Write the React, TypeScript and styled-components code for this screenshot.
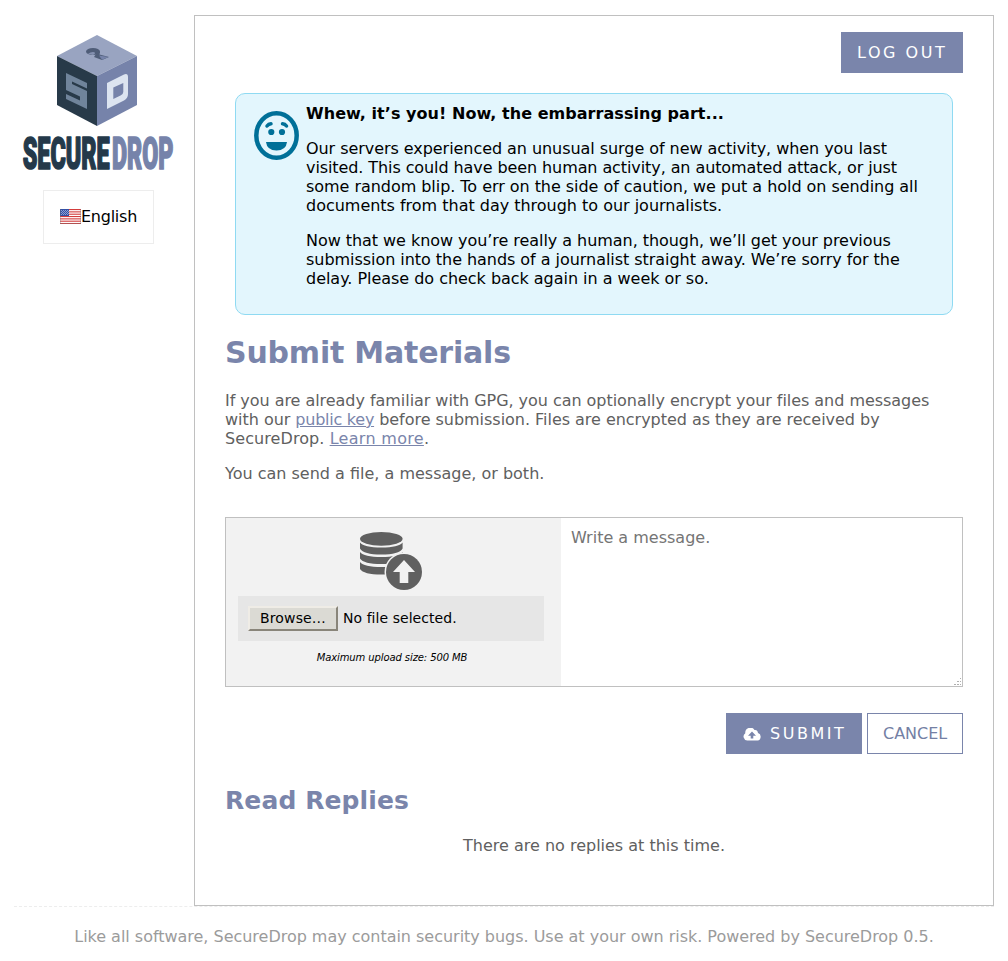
import React from "react";
import styled, { createGlobalStyle, css } from "styled-components";

const GlobalStyle = createGlobalStyle`
  * { box-sizing: border-box; }
  body {
    margin: 0;
    background: #fff;
    color: #000;
    font: 16px/19px "DejaVu Sans", sans-serif;
  }
  p, h1, h2 { margin: 0; }
`;

const Page = styled.div`
  padding: 15px 14px 0;
`;

const Columns = styled.div`
  display: grid;
  grid-template-columns: 180px 800px;
`;

const Sidebar = styled.aside`
  display: flex;
  flex-direction: column;
  align-items: flex-start;
`;

const LogoArt = styled.svg`
  display: block;
  width: 166px;
  height: 145px;
  margin-top: 19px;
  overflow: visible;
`;

const Language = styled.div`
  display: flex;
  align-items: center;
  width: 111px;
  height: 54px;
  margin: 11px 0 0 29px;
  padding: 0 0 2px 16px;
  border: 1px solid #ededed;
  letter-spacing: -0.25px;
`;

const Flag = styled.svg`
  display: block;
  width: 21px;
  height: 15px;
`;

const Main = styled.main`
  height: 891px;
  padding: 16px 30px 0;
  border: 1px solid #c0c0c0;
  color: #606060;
`;

const Actions = styled.div`
  display: flex;
  justify-content: flex-end;
  gap: 5px;
`;

const Button = styled.button<{ $outline?: boolean; $width: number }>`
  display: flex;
  align-items: center;
  width: ${(p) => p.$width}px;
  height: 41px;
  padding: 0 0 0 15px;
  border: 1px solid #7a85ab;
  background: #7a85ab;
  color: #fff;
  font: inherit;
  letter-spacing: 2.55px;
  white-space: nowrap;
  ${(p) =>
    p.$outline &&
    css`
      background: #fff;
      color: #7480a4;
      letter-spacing: 0;
    `}
`;

const CloudIcon = styled.svg`
  width: 19px;
  height: 13px;
  margin: 2px 8px 0 1px;
`;

const Notice = styled.section`
  display: flex;
  height: 222px;
  margin: 20px 10px 0;
  padding: 10px 10px 0 18px;
  border: 1px solid #8fdaf2;
  border-radius: 10px;
  background: #e3f6fd;
  color: #000;
`;

const Smiley = styled.svg`
  flex: none;
  width: 46px;
  height: 50px;
  margin: 7px 6px 0 0;
`;

const NoticeBody = styled.div`
  flex: 1;
`;

const Paragraph = styled.p`
  margin-bottom: 16px;
`;

const Line = styled.span<{ $track?: number }>`
  display: block;
  white-space: nowrap;
  letter-spacing: ${(p) => p.$track ?? 0}px;
`;

const Title = styled.h1`
  margin-top: 20px;
  color: #7a85ab;
  font-size: 30px;
  line-height: 35px;
  letter-spacing: -0.2px;
`;

const Subtitle = styled.h2`
  margin-top: 32px;
  color: #7a85ab;
  font-size: 25px;
  line-height: 29px;
  letter-spacing: 0.1px;
`;

const Intro = styled.div`
  margin-top: 21px;
`;

const Link = styled.a<{ $track?: number }>`
  color: #7a85ab;
  text-decoration: underline;
  letter-spacing: ${(p) => p.$track ?? 0}px;
`;

const Composer = styled.div`
  display: grid;
  grid-template-columns: 335px 1fr;
  height: 170px;
  margin: 34px 0 26px;
  border: 1px solid #c0c0c0;
`;

const UploadPane = styled.div`
  display: flex;
  flex-direction: column;
  align-items: center;
  padding: 13px 17px 0 12px;
  background: #f2f2f2;
`;

const UploadIcon = styled.svg`
  display: block;
  width: 64px;
  height: 60px;
`;

const FileRow = styled.div`
  display: flex;
  align-items: center;
  gap: 5px;
  width: 306px;
  height: 45px;
  margin-top: 5px;
  padding-left: 10px;
  background: #e6e6e6;
  color: #000;
  font-size: 14px;
  letter-spacing: 0.05px;
`;

const Browse = styled.button`
  width: 90px;
  height: 25px;
  padding: 0;
  border: 2px solid;
  border-color: #efece6 #89857a #89857a #efece6;
  background: #dbdad4;
  color: #000;
  font: inherit;
  letter-spacing: 0.15px;
`;

const UploadHint = styled.p`
  margin-top: 10px;
  padding-left: 2px;
  color: #000;
  font-size: 10px;
  line-height: 13px;
  font-style: italic;
  letter-spacing: -0.1px;
`;

const Message = styled.div`
  display: flex;
  flex-direction: column;
  justify-content: space-between;
  padding: 10px 0 0 10px;
  color: #757575;
`;

const Grip = styled.svg`
  align-self: flex-end;
  width: 9px;
  height: 9px;
`;

const Empty = styled.p`
  margin-top: 21px;
  text-align: center;
`;

const Footer = styled.footer`
  padding-top: 20px;
  border-top: 1px dashed #ededed;
  color: #9b9b9b;
  text-align: center;
  letter-spacing: -0.02px;
`;

const stripes = [0, 1, 2, 3, 4, 5, 6];

function Logo() {
  return (
    <LogoArt viewBox="14 34 166 145" aria-label="SecureDrop">
      <path d="M97 35 137 56 97 76 57 56Z" fill="#99a4c1" />
      <path d="M57 56 97 76V126L57 105Z" fill="#283a49" />
      <path d="M97 76 137 56V105L97 126Z" fill="#7683aa" />
      <path
        d="M66 73 87 83V88.500L72 81.500V84L87 91V109L66 99V94L80 100.500V96.500L66 90Z"
        fill="#70849b"
      />
      <path
        fillRule="evenodd"
        d="M107 83 124 74.500Q128 73 128 77V94Q128 98 124 100.500L107 109ZM113.300 87.500V99L120.500 95.500Q123.300 94 123.300 92V83Z"
        fill="#dce4f0"
      />
      <ellipse cx="93" cy="51.500" rx="7" ry="3.600" fill="#4f5d78" />
      <path d="M97 50 100 52 99.500 54.500 109 57 102 60 94 57 96 54Z" fill="#4f5d78" />
      <path d="M88 53.800Q91 51.500 94.500 52.200Q96 53.500 93 55Z" fill="#8490b0" />
      <path d="M99 55.500 108.500 57 102 59.800Z" fill="#7683aa" />
      <g fontFamily="Roboto, sans-serif" fontWeight="900" fontSize="44" strokeLinejoin="round" strokeWidth="1.700">
        <text x="22.700" y="168.800" textLength="87" lengthAdjust="spacingAndGlyphs" fill="#24394a" stroke="#24394a">
          SECURE
        </text>
        <text x="112" y="168.800" textLength="61.500" lengthAdjust="spacingAndGlyphs" fill="#7683aa" stroke="#7683aa">
          DROP
        </text>
      </g>
    </LogoArt>
  );
}

export default function App() {
  return (
    <>
      <GlobalStyle />
      <Page>
        <Columns>
          <Sidebar>
            <Logo />
            <Language>
              <Flag viewBox="0 0 21 15">
                <rect width="21" height="15" rx="1" fill="#fff" />
                {stripes.map((i) => (
                  <rect key={i} y={i * 2.33} width="21" height="1.1" fill="#d33d3d" />
                ))}
                <rect width="9" height="7" fill="#3450a4" />
                <path d="M1 1.500H9M2 2.500H9M1 3.500H9M2 4.500H9M1 5.500H9" stroke="#8fa0d0" strokeDasharray="1 1" />
                <path d="M.5 0V15M20.500 0V15M0 14.500H21" stroke="#777" strokeOpacity=".35" />
              </Flag>
              English
            </Language>
          </Sidebar>
          <Main>
            <Actions>
              <Button $width={122}>LOG OUT</Button>
            </Actions>
            <Notice>
              <Smiley viewBox="0 0 46 50">
                <ellipse cx="22.500" cy="24.500" rx="20.200" ry="22.200" fill="none" stroke="#007098" strokeWidth="4.500" />
                <circle cx="17.300" cy="21" r="3.100" fill="#007098" />
                <circle cx="28" cy="21" r="3.100" fill="#007098" />
                <path d="M13 15Q14.500 13 17 12.800M28.500 12.800Q31 13 32.500 15" fill="none" stroke="#007098" strokeWidth="3.500" strokeLinecap="round" />
                <path d="M12 31H33Q32 39.500 22.500 39.500Q13 39.500 12 31Z" fill="#007098" />
              </Smiley>
              <NoticeBody>
                <Paragraph>
                  <Line as="strong" $track={0.045}>Whew, it’s you! Now, the embarrassing part...</Line>
                </Paragraph>
                <Paragraph>
                  <Line $track={-0.055}>Our servers experienced an unusual surge of new activity, when you last </Line>
                  <Line $track={-0.09}>visited. This could have been human activity, an automated attack, or just </Line>
                  <Line $track={-0.045}>some random blip. To err on the side of caution, we put a hold on sending all </Line>
                  <Line $track={-0.015}>documents from that day through to our journalists.</Line>
                </Paragraph>
                <Paragraph>
                  <Line $track={-0.05}>Now that we know you’re really a human, though, we’ll get your previous </Line>
                  <Line $track={-0.045}>submission into the hands of a journalist straight away. We’re sorry for the </Line>
                  <Line $track={-0.03}>delay. Please do check back again in a week or so.</Line>
                </Paragraph>
              </NoticeBody>
            </Notice>
            <Title>Submit Materials</Title>
            <Intro>
              <Paragraph>
                <Line $track={-0.042}>If you are already familiar with GPG, you can optionally encrypt your files and messages </Line>
                <Line $track={-0.03}>
                  with our <Link $track={-0.25}>public key</Link> before submission. Files are encrypted as they are
                  received by{" "}
                </Line>
                <Line $track={0.08}>
                  SecureDrop. <Link $track={0.3}>Learn more</Link>.
                </Line>
              </Paragraph>
              <p>You can send a file, a message, or both.</p>
            </Intro>
            <Composer>
              <UploadPane>
                <UploadIcon viewBox="0 0 64 60" fill="#606060">
                  <ellipse cx="22.300" cy="7.800" rx="21.300" ry="6.900" />
                  <path d="M1 11.500Q5 16.500 22.300 16.500T43.600 11.500V17.500Q40 23.500 22.300 23.500T1 17.500Z" />
                  <path d="M1 21Q5 26 22.300 26T43.600 21V27.500Q40 33 22.300 33T1 27.500Z" />
                  <path d="M1 31Q5 36 22.300 36T43.600 31V38Q40 43.500 22.300 43.500T1 38Z" />
                  <circle cx="45" cy="41" r="19.500" fill="#f2f2f2" />
                  <circle cx="45" cy="41" r="18" />
                  <path d="M45 29 56 41H49.300V52H40.700V41H34Z" fill="#f2f2f2" />
                </UploadIcon>
                <FileRow>
                  <Browse>Browse…</Browse>
                  <span>No file selected.</span>
                </FileRow>
                <UploadHint>Maximum upload size: 500 MB</UploadHint>
              </UploadPane>
              <Message>
                <span>Write a message.</span>
                <Grip viewBox="0 0 9 9" fill="#b0b0b0">
                  <path d="M7 1h1v1H7zM4 4h2v1H4zM7 4h1v1H7zM1 7h2v1H1zM4 7h2v1H4zM7 7h1v1H7z" />
                </Grip>
              </Message>
            </Composer>
            <Actions>
              <Button $width={136}>
                <CloudIcon viewBox="0 0 19 13">
                  <path d="M4.200 12.500A4 4 0 0 1 2.300 5.200A5 5 0 0 1 11.500 2Q14.500 1.500 15 5A3.900 3.900 0 0 1 14.600 12.500Z" fill="#fff" />
                  <path d="M9 3.500 13 7.700H10.300V10.500H7.700V7.700H5Z" fill="#7a85ab" />
                </CloudIcon>
                SUBMIT
              </Button>
              <Button $outline $width={96}>CANCEL</Button>
            </Actions>
            <Subtitle>Read Replies</Subtitle>
            <Empty>There are no replies at this time.</Empty>
          </Main>
        </Columns>
        <Footer>Like all software, SecureDrop may contain security bugs. Use at your own risk. Powered by SecureDrop 0.5.</Footer>
      </Page>
    </>
  );
}
